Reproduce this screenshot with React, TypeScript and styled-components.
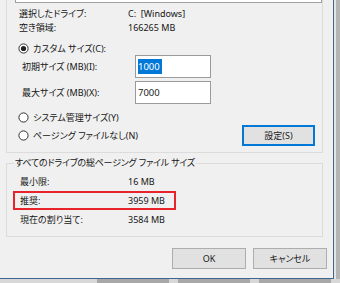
import React from 'react';
import styled, { createGlobalStyle } from 'styled-components';

const GlobalStyle = createGlobalStyle`
  html, body {
    margin: 0;
    padding: 0;
  }
  body {
    background: #c4c4c4;
    font-family: "Noto Sans", "Noto Sans CJK JP", sans-serif;
    font-size: 9px;
    color: #151515;
    font-feature-settings: "palt";
  }
`;

const Screen = styled.div`
  width: 340px;
  height: 283px;
  overflow: hidden;
  display: flex;
  flex-direction: column;
  background: #c4c4c4;
`;

const TopArea = styled.div`
  display: flex;
  height: 279px;
`;

const Dialog = styled.div`
  width: 333px;
  height: 278px;
  flex-shrink: 0;
  background: #f0f0f0;
  border-right: 1px solid #3d6790;
  border-bottom: 1px solid #3d6790;
  display: flex;
  flex-direction: column;
`;

const RightGutter = styled.div`
  flex: 1;
  border-left: 2px solid #e4e4e4;
  background: #b4b4b4;
`;

const BottomStrip = styled.div`
  flex: 1;
  display: flex;
  gap: 9px;
  padding-left: 97px;
  background: #d8d8d8;
`;

const ParentButton = styled.div`
  width: 72px;
  background: #a8a8a8;
`;

const SizeGroup = styled.div`
  margin-left: 6px;
  width: 315px;
  height: 152px;
  border: 1px solid #dcdcdc;
  border-top: none;
  display: flex;
  flex-direction: column;
`;

const ListTail = styled.div`
  margin-left: 8px;
  width: 305px;
  height: 2px;
  background: #fff;
  border: 1px solid #a0a0a0;
  border-top: none;
`;

const InfoGrid = styled.div`
  margin-top: 4px;
  padding-left: 12px;
  display: grid;
  grid-template-columns: 109px 1fr;
  line-height: 14px;
`;

const RadioRow = styled.label<{ $top: number }>`
  margin-top: ${p => p.$top}px;
  padding-left: 11px;
  height: 14px;
  display: flex;
  align-items: center;
  gap: 4px;
  white-space: pre;
`;

const SizeRow = styled.div<{ $top: number }>`
  margin-top: ${p => p.$top}px;
  padding-left: 15px;
  display: flex;
  align-items: center;
`;

const SizeLabel = styled.span`
  width: 113px;
  white-space: pre;
`;

const Field = styled.div`
  box-sizing: border-box;
  width: 76px;
  height: 23px;
  background: #fff;
  border: 1px solid #9a9a9a;
  padding: 2px 2px;
  display: flex;
  align-items: center;
  font-size: 9.5px;
  color: #222;
`;

const Selection = styled.span`
  background: #0078d7;
  color: #fff;
  line-height: 15px;
  padding-right: 2px;
`;

const LastRow = styled.div`
  margin-top: 1px;
  height: 21px;
  display: flex;
  align-items: center;
  justify-content: space-between;
  padding-right: 7px;
`;

const Button = styled.button<{ $focused?: boolean }>`
  box-sizing: border-box;
  width: ${p => (p.$focused ? 73 : 74)}px;
  height: 21px;
  padding: 0;
  font: inherit;
  color: #1a1a1a;
  background: #e1e1e1;
  border: ${p => (p.$focused ? '2px solid #0078d7' : '1px solid #adadad')};
`;

const TotalGroup = styled.fieldset`
  margin: 4px 0 0 6px;
  width: 315px;
  padding: 3px 0 7px 0;
  border: 1px solid #dcdcdc;
  display: flex;
  flex-direction: column;
`;

const Legend = styled.legend`
  margin-left: 7px;
  padding: 0 1px;
  line-height: 12px;
  white-space: pre;
  letter-spacing: -0.2px;
`;

const TotalRow = styled.div<{ $highlight?: boolean }>`
  margin-left: 6px;
  width: 154px;
  height: 15px;
  padding-left: 5px;
  border: 2px solid ${p => (p.$highlight ? '#e8232b' : 'transparent')};
  display: grid;
  grid-template-columns: 108px 1fr;
  align-items: center;
`;

const ButtonBar = styled.div`
  margin-top: 11px;
  padding-right: 6px;
  display: flex;
  justify-content: flex-end;
  gap: 7px;
`;

const Radio: React.FC<{ checked?: boolean }> = ({ checked }) => (
  <svg width="11" height="11" viewBox="0 0 11 11">
    <circle cx="5.5" cy="5.5" r="4.6" fill="#fff" stroke="#333" strokeWidth="1" />
    {checked && <circle cx="5.5" cy="5.5" r="2.6" fill="#222" />}
  </svg>
);

const App: React.FC = () => (
  <>
    <GlobalStyle />
    <Screen>
      <TopArea>
        <Dialog>
          <SizeGroup>
            <ListTail />
            <InfoGrid>
              <span>選択したドライブ:</span>
              <span>C:&nbsp;&nbsp;[Windows]</span>
              <span>空き領域:</span>
              <span>166265 MB</span>
            </InfoGrid>
            <RadioRow $top={6}>
              <Radio checked />
              カスタム サイズ(C):
            </RadioRow>
            <SizeRow $top={0}>
              <SizeLabel>初期サイズ (MB)(I):</SizeLabel>
              <Field>
                <Selection>1000</Selection>
              </Field>
            </SizeRow>
            <SizeRow $top={3}>
              <SizeLabel>最大サイズ (MB)(X):</SizeLabel>
              <Field>7000</Field>
            </SizeRow>
            <RadioRow $top={6}>
              <Radio />
              システム管理サイズ(Y)
            </RadioRow>
            <LastRow>
              <RadioRow $top={0}>
                <Radio />
                ページング ファイルなし(N)
              </RadioRow>
              <Button $focused>設定(S)</Button>
            </LastRow>
          </SizeGroup>
          <TotalGroup>
            <Legend>すべてのドライブの総ページング ファイル サイズ</Legend>
            <TotalRow>
              <span>最小限:</span>
              <span>16 MB</span>
            </TotalRow>
            <TotalRow $highlight>
              <span>推奨:</span>
              <span>3959 MB</span>
            </TotalRow>
            <TotalRow>
              <span>現在の割り当て:</span>
              <span>3584 MB</span>
            </TotalRow>
          </TotalGroup>
          <ButtonBar>
            <Button>OK</Button>
            <Button>キャンセル</Button>
          </ButtonBar>
        </Dialog>
        <RightGutter />
      </TopArea>
      <BottomStrip>
        <ParentButton />
        <ParentButton />
        <ParentButton />
      </BottomStrip>
    </Screen>
  </>
);

export default App;
